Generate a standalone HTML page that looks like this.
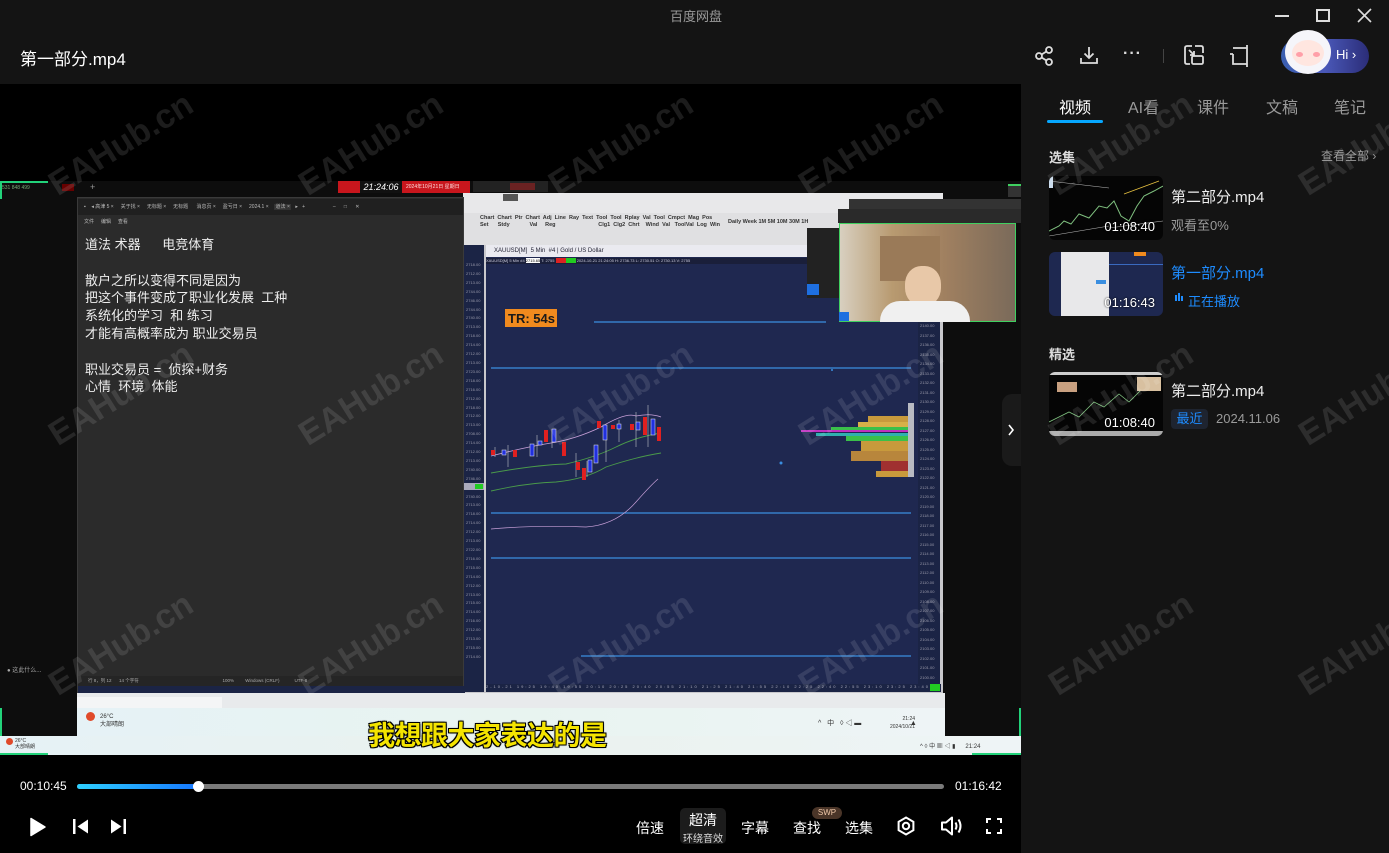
<!DOCTYPE html>
<html><head><meta charset="utf-8">
<style>
*{margin:0;padding:0;box-sizing:border-box}
html{width:1389px;height:853px;overflow:hidden}
body{width:1389px;height:853px;overflow:hidden;background:#141414;font-family:"Liberation Sans","Noto Sans CJK SC",sans-serif;position:relative;color:#fff}
.a{position:absolute}
.wm{position:absolute;font:bold 34px "Liberation Sans",sans-serif;color:rgba(255,255,255,0.11);transform:rotate(-32deg);white-space:nowrap;pointer-events:none;z-index:50}
.tab{position:absolute;top:94px;font-size:16px;color:#9a9a9a}
.thumb{position:absolute;left:1049px;width:114px;height:64px;border-radius:6px;overflow:hidden;background:#050505}
.dur{position:absolute;right:8px;bottom:6px;font-size:13px;color:#fff;text-shadow:0 0 2px #000}
.ctl{position:absolute;top:818px;font-size:14px;color:#fff}
</style></head><body>

<div class="a" style="left:0;top:0;width:1389px;height:84px;background:#141414"></div>
<div class="a" style="left:670px;top:6px;font-size:13px;color:#9a9a9a">百度网盘</div>
<div class="a" style="left:20px;top:45px;font-size:17px;color:#fff">第一部分.mp4</div>
<div class="a" style="left:1275px;top:15px;width:14px;height:1.5px;background:#ddd"></div>
<div class="a" style="left:1316px;top:9px;width:14px;height:13px;border:2px solid #ddd"></div>
<svg class="a" style="left:1357px;top:8px" width="15" height="15"><path d="M1 1L14 14M14 1L1 14" stroke="#ddd" stroke-width="1.6"/></svg>
<svg class="a" style="left:1034px;top:46px" width="20" height="20" fill="none" stroke="#ddd" stroke-width="1.8"><circle cx="5" cy="10" r="3"/><circle cx="15" cy="4" r="3"/><circle cx="15" cy="16" r="3"/><path d="M7.6 8.5L12.4 5.5M7.6 11.5L12.4 14.5"/></svg>
<svg class="a" style="left:1079px;top:45px" width="20" height="20" fill="none" stroke="#ddd" stroke-width="1.8"><path d="M10 2V13M5.5 8.5L10 13L14.5 8.5M2 13V18H18V13"/></svg>
<div class="a" style="left:1123px;top:45px;font-size:16px;color:#ddd;letter-spacing:1px;font-weight:bold">···</div>
<div class="a" style="left:1163px;top:49px;width:1px;height:14px;background:#444"></div>
<svg class="a" style="left:1183px;top:44px" width="22" height="22" fill="none" stroke="#ddd" stroke-width="1.8"><path d="M9 2H4Q2 2 2 4V18Q2 20 4 20H7M12 2H18Q20 2 20 4V9"/><rect x="9" y="12" width="11" height="8" rx="1.5"/><path d="M6 6L11 11M11 7V11H7"/></svg>
<svg class="a" style="left:1228px;top:44px" width="22" height="24" fill="none" stroke="#ddd" stroke-width="1.8"><path d="M2 10H5M5 4H19V20H5V10M19 1V4M19 20V23"/></svg>
<div class="a" style="left:1281px;top:39px;width:88px;height:34px;border-radius:17px;background:linear-gradient(90deg,#3a5fb0,#4a58b8 50%,#2b2d78)"></div>
<div class="a" style="left:1285px;top:30px;width:46px;height:44px;border-radius:50%;background:#f5f5fa"></div>
<div class="a" style="left:1292px;top:40px;width:32px;height:26px;border-radius:50%;background:#ffe6e0"></div>
<div class="a" style="left:1296px;top:52px;width:7px;height:5px;border-radius:50%;background:#ff9fa8"></div>
<div class="a" style="left:1313px;top:52px;width:7px;height:5px;border-radius:50%;background:#ff9fa8"></div>
<div class="a" style="left:1336px;top:47px;font-size:13px;color:#fff">Hi ›</div>

<div class="a" style="left:0;top:84px;width:1021px;height:769px;background:#000"></div>
<div class="a" style="left:1021px;top:84px;width:368px;height:769px;background:#141414"></div>

<div class="a" style="left:0;top:181px;width:1021px;height:574px;background:#0d0d0d;overflow:hidden">
  <div class="a" style="left:0;top:0;width:48px;height:2px;background:#22d27a"></div>
  <div class="a" style="left:0;top:0;width:2px;height:18px;background:#22d27a"></div>
  <div class="a" style="left:2px;top:4px;font-size:5px;color:#7a7">531 848 499</div>
  <div class="a" style="left:62px;top:3px;width:12px;height:7px;background:#600"></div>
  <div class="a" style="left:90px;top:1px;font-size:9px;color:#999">+</div>
  <div class="a" style="left:338px;top:0;width:132px;height:12px;background:#c8161d"></div>
  <div class="a" style="left:360px;top:0;width:42px;height:12px;background:#111;font-size:9px;color:#fff;font-style:italic;text-align:center;line-height:12px">21:24:06</div>
  <div class="a" style="left:406px;top:2px;font-size:5px;color:#fdd">2024年10月21日 星期日</div>
  <div class="a" style="left:473px;top:0;width:75px;height:11px;background:#222"></div>
  <div class="a" style="left:510px;top:2px;width:25px;height:7px;background:#6a2222"></div>
  <div class="a" style="left:463px;top:12px;width:480px;height:20px;background:#e8e8ea"></div>
  <div class="a" style="left:463px;top:32px;width:480px;height:32px;background:#e0e0e2"></div>
  <div class="a" style="left:503px;top:13px;width:15px;height:7px;background:#555"></div>
  <div class="a" style="left:480px;top:34px;font-size:5.5px;color:#333;line-height:7px;white-space:nowrap;font-weight:bold">Chart&nbsp; Chart&nbsp; Ptr&nbsp; Chart&nbsp; Adj&nbsp; Line&nbsp; Ray&nbsp; Text&nbsp; Tool&nbsp; Tool&nbsp; Rplay&nbsp; Val&nbsp; Tool&nbsp; Cmpct&nbsp; Mag&nbsp; Pos<br>Set&nbsp;&nbsp;&nbsp;&nbsp;&nbsp; Stdy&nbsp;&nbsp;&nbsp;&nbsp;&nbsp;&nbsp;&nbsp;&nbsp;&nbsp;&nbsp;&nbsp;&nbsp; Val&nbsp;&nbsp;&nbsp;&nbsp; Reg&nbsp;&nbsp;&nbsp;&nbsp;&nbsp;&nbsp;&nbsp;&nbsp;&nbsp;&nbsp;&nbsp;&nbsp;&nbsp;&nbsp;&nbsp;&nbsp;&nbsp;&nbsp;&nbsp;&nbsp;&nbsp;&nbsp;&nbsp;&nbsp;&nbsp;&nbsp;&nbsp; Clg1&nbsp; Clg2&nbsp; Chrt&nbsp;&nbsp;&nbsp; Wind&nbsp; Val&nbsp;&nbsp; ToolVal&nbsp; Log&nbsp; Win</div>
  <div class="a" style="left:728px;top:38px;font-size:5.5px;color:#333;font-weight:bold;white-space:nowrap">Daily Week 1M 5M 10M 30M 1H</div>
  <div class="a" style="left:463px;top:64px;width:480px;height:450px;background:#c8c8cc"></div>
  <div class="a" style="left:464px;top:64px;width:20px;height:447px;background:#1b2445"></div>
  <div class="a" style="left:486px;top:64px;width:455px;height:12px;background:#eaeaf0;font-size:6px;color:#223;line-height:12px;padding-left:8px">XAUUSD[M]&nbsp; 5 Min&nbsp; #4 | Gold / US Dollar</div>
  <div class="a" style="left:486px;top:76px;width:434px;height:428px;background:#1f2850"></div>
  <div class="a" style="left:486px;top:77px;width:432px;height:6px;background:#1a1f3a;font-size:4px;color:#ccd;white-space:nowrap">XAUUSD[M] 5 Min #4 <span style="background:#fff;color:#000">2715.65</span> T: 2755 <span style="background:#d22">&nbsp;&nbsp;&nbsp;&nbsp;&nbsp;&nbsp;&nbsp;&nbsp;&nbsp;</span><span style="background:#2c2">&nbsp;&nbsp;&nbsp;&nbsp;&nbsp;&nbsp;&nbsp;&nbsp;&nbsp;</span> 2024-10-21 21:24:05 H: 2736.73 L: 2730.51 O: 2730.13 V: 2755</div>
  <div class="a" style="left:918px;top:76px;width:22px;height:428px;background:#1b2445"></div>
  <div class="a" style="left:486px;top:503px;width:455px;height:8px;background:#1b2445"></div>
  <div class="a" style="left:486px;top:503px;font-size:4px;color:#aab;white-space:nowrap;letter-spacing:2px">2-10-21 19:25 19:40 19:55 20:10 20:25 20:40 20:55 21:10 21:25 21:40 21:55 22:10 22:25 22:40 22:55 23:10 23:25 23:40</div>
  <div class="a" style="left:930px;top:503px;width:10px;height:7px;background:#2c2"></div>
  <div class="a" style="left:466px;top:80px;font-size:4px;color:#99a;line-height:8.9px">2718.00<br>2712.00<br>2713.00<br>2744.00<br>2746.00<br>2744.00<br>2740.00<br>2713.00<br>2718.00<br>2714.00<br>2712.00<br>2713.00<br>2723.00<br>2718.00<br>2716.00<br>2712.00<br>2718.00<br>2712.00<br>2713.00<br>2708.00<br>2714.00<br>2712.00<br>2713.00<br>2740.00<br>2746.00<br>2744.00<br>2740.00<br>2713.00<br>2718.00<br>2714.00<br>2712.00<br>2713.00<br>2722.00<br>2716.00<br>2715.00<br>2714.00<br>2712.00<br>2713.00<br>2715.00<br>2714.00<br>2716.00<br>2712.00<br>2713.00<br>2715.00<br>2714.00</div>
  <div class="a" style="left:920px;top:140px;font-size:4px;color:#99a;line-height:9.5px">2140.00<br>2137.00<br>2136.00<br>2135.00<br>2134.00<br>2133.00<br>2132.00<br>2131.00<br>2130.00<br>2129.00<br>2128.00<br>2127.00<br>2126.00<br>2125.00<br>2124.00<br>2123.00<br>2122.00<br>2121.00<br>2120.00<br>2119.00<br>2118.00<br>2117.00<br>2116.00<br>2115.00<br>2114.00<br>2113.00<br>2112.00<br>2110.00<br>2109.00<br>2108.00<br>2107.00<br>2106.00<br>2105.00<br>2104.00<br>2103.00<br>2102.00<br>2101.00<br>2100.00</div>
  <div class="a" style="left:464px;top:302px;width:20px;height:7px;background:#aab"></div>
  <div class="a" style="left:475px;top:303px;width:8px;height:5px;background:#2c2"></div>
  <svg class="a" style="left:486px;top:76px" width="432" height="428">
    <rect x="19" y="52" width="52" height="18" fill="#f08a1e"/>
    <text x="22" y="66" font-family="Liberation Sans" font-weight="bold" font-size="13" fill="#1a1a1a">TR: 54s</text>
    <line x1="108" y1="65" x2="340" y2="65" stroke="#3a8ee0" stroke-width="1.2"/>
    <line x1="5" y1="111" x2="425" y2="111" stroke="#3a8ee0" stroke-width="1.2"/>
    <line x1="5" y1="256" x2="425" y2="256" stroke="#3a8ee0" stroke-width="1.2"/>
    <line x1="5" y1="301" x2="425" y2="301" stroke="#3a8ee0" stroke-width="1.2"/>
    <line x1="95" y1="399" x2="425" y2="399" stroke="#3a8ee0" stroke-width="1.2"/>
    <path d="M5 199Q40 190 65 186Q90 182 115 170Q140 155 150 159Q165 156 175 160" fill="none" stroke="#c8a0d8" stroke-width="0.8"/>
    <path d="M5 216Q50 208 80 207Q110 200 130 190Q150 180 175 176" fill="none" stroke="#4a9a4a" stroke-width="0.9"/>
    <path d="M5 234Q40 226 70 225Q100 222 120 210Q150 200 175 196" fill="none" stroke="#4a9a4a" stroke-width="0.9"/>
    <path d="M5 272Q50 268 100 270Q130 268 150 245Q165 228 172 222" fill="none" stroke="#c8a0d8" stroke-width="0.7"/>
    <g stroke="#ddd" stroke-width="0.5">
      <line x1="9" y1="190" x2="9" y2="200"/><line x1="22" y1="188" x2="22" y2="210"/><line x1="51" y1="178" x2="51" y2="200"/><line x1="66" y1="172" x2="66" y2="191"/><line x1="90" y1="196" x2="90" y2="220"/><line x1="101" y1="204" x2="101" y2="220"/><line x1="120" y1="170" x2="120" y2="205"/><line x1="133" y1="163" x2="133" y2="185"/><line x1="150" y1="155" x2="150" y2="190"/><line x1="162" y1="148" x2="162" y2="190"/>
    </g>
    <g fill="#e02020">
      <rect x="5" y="193" width="4" height="5"/><rect x="27" y="193" width="4" height="7"/><rect x="58" y="173" width="4" height="12"/><rect x="76" y="185" width="4" height="14"/><rect x="90" y="205" width="4" height="8"/><rect x="96" y="211" width="4" height="12"/><rect x="111" y="164" width="4" height="7"/><rect x="125" y="168" width="4" height="4"/><rect x="144" y="167" width="4" height="6"/><rect x="157" y="160" width="4" height="18"/><rect x="171" y="170" width="4" height="14"/>
    </g>
    <g fill="#2030e0" stroke="#eee" stroke-width="0.5">
      <rect x="16" y="193" width="4" height="5"/><rect x="44" y="187" width="4" height="12"/><rect x="52" y="184" width="4" height="4"/><rect x="66" y="172" width="4" height="13"/><rect x="102" y="203" width="4" height="12"/><rect x="108" y="188" width="4" height="18"/><rect x="117" y="168" width="4" height="15"/><rect x="131" y="167" width="4" height="5"/><rect x="150" y="165" width="4" height="8"/><rect x="165" y="162" width="4" height="16"/>
    </g>
    <circle cx="295" cy="206" r="1.5" fill="#3a8ee0"/><circle cx="346" cy="113" r="1" fill="#3a8ee0"/>
    <g>
      <rect x="382" y="159" width="40" height="8" fill="#c89a3c"/>
      <rect x="372" y="165" width="50" height="6" fill="#d8b048"/>
      <rect x="345" y="170" width="77" height="3" fill="#3ac04a"/>
      <rect x="315" y="173" width="107" height="2" fill="#c030c0"/>
      <rect x="330" y="176" width="92" height="3" fill="#30b0b0"/>
      <rect x="360" y="179" width="62" height="5" fill="#3ac04a"/>
      <rect x="375" y="184" width="47" height="10" fill="#c89a3c"/>
      <rect x="365" y="194" width="57" height="10" fill="#b8863c"/>
      <rect x="395" y="204" width="27" height="10" fill="#a03030"/>
      <rect x="390" y="214" width="32" height="6" fill="#c89a3c"/>
      <rect x="422" y="146" width="6" height="74" fill="#e0e0e0" opacity="0.8"/>
    </g>
  </svg>
  <div class="a" style="left:807px;top:47px;width:32px;height:70px;background:#222"></div>
  <div class="a" style="left:807px;top:103px;width:12px;height:11px;background:#1e6fe0"></div>
  <div class="a" style="left:849px;top:18px;width:172px;height:10px;background:#333"></div>
  <div class="a" style="left:838px;top:28px;width:183px;height:14px;background:#2a2a2a"></div>
  <div class="a" style="left:839px;top:42px;width:177px;height:99px;border:1px solid #3fd060;background:linear-gradient(90deg,#d8d0c0 0%,#b89a70 30%,#a08060 60%,#7a6a5a 100%)"></div>
  <div class="a" style="left:880px;top:55px;width:60px;height:45px;background:#9a7a58"></div>
  <div class="a" style="left:905px;top:85px;width:36px;height:40px;border-radius:45%;background:#e8c8a8"></div>
  <div class="a" style="left:880px;top:120px;width:90px;height:21px;border-radius:20px 20px 0 0;background:#f0f0f0"></div>
  <div class="a" style="left:839px;top:131px;width:10px;height:9px;background:#1e6fe0"></div>
  <div class="a" style="left:1008px;top:3px;width:13px;height:13px;background:#333;border-top:2px solid #3fd060"></div>
  <div class="a" style="left:7px;top:484px;font-size:6px;color:#aaa">● 这此什么...</div>
  <div class="a" style="left:77px;top:16px;width:387px;height:502px;background:#2b2b2b;border:1px solid #3a3a3a"></div>
  <div class="a" style="left:78px;top:18px;width:385px;height:16px;background:#202020;font-size:5px;color:#bbb;line-height:16px;white-space:nowrap;padding-left:6px">▪&nbsp;&nbsp;&nbsp;&nbsp;◂ 高津 5 ×&nbsp;&nbsp;&nbsp;&nbsp; 关于找 ×&nbsp;&nbsp;&nbsp;&nbsp; 无标题 ×&nbsp;&nbsp;&nbsp;&nbsp; 无标题&nbsp;&nbsp;&nbsp;&nbsp;&nbsp; 消息页 ×&nbsp;&nbsp;&nbsp;&nbsp; 盈亏日 ×&nbsp;&nbsp;&nbsp;&nbsp; 2024.1 ×&nbsp;&nbsp;&nbsp; <span style="background:#333">&nbsp;道法 ×&nbsp;</span>&nbsp;&nbsp; ▸&nbsp;&nbsp; +&nbsp;&nbsp;&nbsp;&nbsp;&nbsp;&nbsp;&nbsp;&nbsp;&nbsp;&nbsp;&nbsp;&nbsp;&nbsp;&nbsp;&nbsp;&nbsp;&nbsp;&nbsp;&nbsp; –&nbsp;&nbsp;&nbsp;&nbsp;&nbsp; □&nbsp;&nbsp;&nbsp;&nbsp;&nbsp; ✕</div>
  <div class="a" style="left:84px;top:37px;font-size:5px;color:#bbb">文件&nbsp;&nbsp;&nbsp;&nbsp; 编辑&nbsp;&nbsp;&nbsp;&nbsp; 查看</div>
  <div class="a" style="left:85px;top:55px;font-size:13px;color:#eee;line-height:17.8px;white-space:pre">道法 术器      电竞体育

散户之所以变得不同是因为
把这个事件变成了职业化发展  工种
系统化的学习  和 练习
才能有高概率成为 职业交易员

职业交易员 =  侦探+财务
心情  环境  体能</div>
  <div class="a" style="left:78px;top:495px;width:385px;height:10px;background:#252525;font-size:4.5px;color:#aaa;white-space:nowrap;line-height:10px;padding-left:10px">行 8，列 12&nbsp;&nbsp;&nbsp;&nbsp;&nbsp; 14 个字符&nbsp;&nbsp;&nbsp;&nbsp;&nbsp;&nbsp;&nbsp;&nbsp;&nbsp;&nbsp;&nbsp;&nbsp;&nbsp;&nbsp;&nbsp;&nbsp;&nbsp;&nbsp;&nbsp;&nbsp;&nbsp;&nbsp;&nbsp;&nbsp;&nbsp;&nbsp;&nbsp;&nbsp;&nbsp;&nbsp;&nbsp;&nbsp;&nbsp;&nbsp;&nbsp;&nbsp;&nbsp;&nbsp;&nbsp;&nbsp;&nbsp;&nbsp;&nbsp;&nbsp;&nbsp;&nbsp;&nbsp;&nbsp;&nbsp;&nbsp;&nbsp;&nbsp;&nbsp;&nbsp;&nbsp;&nbsp;&nbsp;&nbsp;&nbsp;&nbsp;&nbsp;&nbsp;&nbsp;&nbsp;&nbsp;&nbsp; 100%&nbsp;&nbsp;&nbsp;&nbsp;&nbsp;&nbsp;&nbsp;&nbsp; Windows (CRLF)&nbsp;&nbsp;&nbsp;&nbsp;&nbsp;&nbsp;&nbsp;&nbsp;&nbsp;&nbsp;&nbsp; UTF-8</div>
  <div class="a" style="left:78px;top:505px;width:387px;height:7px;background:#1b2445"></div>
  <div class="a" style="left:77px;top:512px;width:868px;height:15px;background:#e8eaec"></div>
  <div class="a" style="left:77px;top:516px;width:145px;height:11px;background:#f4f5f6"></div>
  <div class="a" style="left:77px;top:527px;width:868px;height:28px;background:linear-gradient(90deg,#e6f2f6,#e8f4f0 50%,#eef4f6)"></div>
  <div class="a" style="left:86px;top:531px;width:9px;height:9px;border-radius:50%;background:#e04a2a"></div>
  <div class="a" style="left:100px;top:532px;font-size:6px;color:#333;line-height:8px">26°C<br>大部晴朗</div>
  <div class="a" style="left:818px;top:537px;font-size:7px;color:#333;white-space:nowrap">^&nbsp;&nbsp; 中&nbsp;&nbsp; ◊ ◁ ▬&nbsp;&nbsp;&nbsp;&nbsp;&nbsp;&nbsp;&nbsp;&nbsp;&nbsp;&nbsp;&nbsp;&nbsp;&nbsp;&nbsp;&nbsp;&nbsp;&nbsp;&nbsp;&nbsp;&nbsp;&nbsp;&nbsp;&nbsp;&nbsp; ▲</div>
  <div class="a" style="left:890px;top:534px;font-size:5px;color:#333;line-height:8px;text-align:right">21:24<br>2024/10/21</div>
  <div class="a" style="left:0;top:527px;width:2px;height:28px;background:#22d27a"></div>
  <div class="a" style="left:1019px;top:527px;width:2px;height:28px;background:#22d27a"></div>
  <div class="a" style="left:0;top:555px;width:1021px;height:19px;background:linear-gradient(90deg,#e6f2f6,#eaf2ee 50%,#eef4f6)"></div>
  <div class="a" style="left:6px;top:557px;width:7px;height:7px;border-radius:50%;background:#e04a2a"></div>
  <div class="a" style="left:15px;top:557px;font-size:5px;color:#333;line-height:6px">26°C<br>大部晴朗</div>
  <div class="a" style="left:920px;top:560px;font-size:6px;color:#333">^ ◊ 中 ▦ ◁ ▮&nbsp;&nbsp;&nbsp;&nbsp;&nbsp; 21:24</div>
  <div class="a" style="left:0;top:572px;width:48px;height:2px;background:#22d27a"></div>
  <div class="a" style="left:972px;top:572px;width:49px;height:2px;background:#22d27a"></div>
  <div class="a" style="left:368px;top:533px;font-size:27px;font-weight:bold;color:#f4e400;letter-spacing:-0.5px;-webkit-text-stroke:1.5px #1a1a1a;paint-order:stroke fill;text-shadow:0 0 2px #000,1px 1px 0 #000,-1px -1px 0 #000,1px -1px 0 #000,-1px 1px 0 #000">我想跟大家表达的是</div>
</div>
<div class="a" style="left:1002px;top:394px;width:19px;height:72px;background:#1a1a1a;border-radius:10px 0 0 10px"></div>
<svg class="a" style="left:1007px;top:424px" width="8" height="12"><path d="M2 1L6 6L2 11" stroke="#fff" stroke-width="1.6" fill="none"/></svg>

<div class="a" style="left:20px;top:779px;font-size:12px;color:#fff">00:10:45</div>
<div class="a" style="left:77px;top:783.5px;width:867px;height:5px;border-radius:3px;background:#7a7a7a"></div>
<div class="a" style="left:77px;top:783.5px;width:122px;height:5px;border-radius:3px;background:linear-gradient(90deg,#2ed0ff,#1677ff)"></div>
<div class="a" style="left:193px;top:780.5px;width:11px;height:11px;border-radius:50%;background:#fff"></div>
<div class="a" style="left:955px;top:779px;font-size:12px;color:#fff">01:16:42</div>
<svg class="a" style="left:29px;top:817px" width="18" height="20"><path d="M2 1.5L16 10L2 18.5Z" fill="#fff" stroke="#fff" stroke-linejoin="round" stroke-width="1.5"/></svg>
<svg class="a" style="left:72px;top:818px" width="18" height="17"><rect x="1" y="1" width="2.5" height="15" fill="#fff"/><path d="M16 1.5L5.5 8.5L16 15.5Z" fill="#fff"/></svg>
<svg class="a" style="left:110px;top:818px" width="18" height="17"><path d="M1 1.5L11.5 8.5L1 15.5Z" fill="#fff"/><rect x="13.5" y="1" width="2.5" height="15" fill="#fff"/></svg>
<div class="ctl" style="left:636px">倍速</div>
<div class="a" style="left:680px;top:808px;width:46px;height:36px;border-radius:5px;background:#1c1c1c"></div>
<div class="ctl" style="left:689px;top:810px">超清</div>
<div class="a" style="left:683px;top:830px;font-size:10px;color:#ddd">环绕音效</div>
<div class="ctl" style="left:741px">字幕</div>
<div class="a" style="left:812px;top:807px;width:30px;height:12px;border-radius:6px;background:#4a3528;font-size:8px;color:#f0c8a8;text-align:center;line-height:12px">SWP</div>
<div class="ctl" style="left:793px">查找</div>
<div class="ctl" style="left:845px">选集</div>
<svg class="a" style="left:896px;top:816px" width="20" height="20" fill="none" stroke="#fff" stroke-width="2"><path d="M10 1.5L17.4 5.8V14.2L10 18.5L2.6 14.2V5.8Z"/><circle cx="10" cy="10" r="3.2"/></svg>
<svg class="a" style="left:940px;top:815px" width="24" height="22" fill="none" stroke="#fff" stroke-width="2" stroke-linejoin="round"><path d="M2 7.5H6L12 2.5V19.5L6 14.5H2Z"/><path d="M15.5 7.5Q17.5 11 15.5 14.5M18.5 4.5Q22.5 11 18.5 17.5"/></svg>
<svg class="a" style="left:986px;top:818px" width="16" height="16" fill="none" stroke="#fff" stroke-width="2"><path d="M1 5V1H5M11 1H15V5M15 11V15H11M5 15H1V11"/></svg>

<div class="tab" style="left:1059px;color:#fff">视频</div>
<div class="a" style="left:1047px;top:120px;width:56px;height:3px;border-radius:2px;background:#06a7ff"></div>
<div class="tab" style="left:1128px">AI看</div>
<div class="tab" style="left:1197px">课件</div>
<div class="tab" style="left:1266px">文稿</div>
<div class="tab" style="left:1334px">笔记</div>
<div class="a" style="left:1049px;top:147px;font-size:13px;font-weight:bold;color:#ddd">选集</div>
<div class="a" style="left:1321px;top:147px;font-size:12px;color:#9a9a9a">查看全部 ›</div>

<div class="thumb" style="top:176px">
  <svg width="114" height="64"><path d="M0 55L10 50L15 45L22 48L30 38L40 42L50 30L58 32L65 25L72 40L80 45L88 30L95 20L105 15L114 10" stroke="#7fc07f" stroke-width="1" fill="none"/><path d="M0 5L60 12M0 60L60 50M60 52L114 45" stroke="#bbb" stroke-width="0.6"/><path d="M75 18L110 5" stroke="#e6c040" stroke-width="0.8"/><rect x="0" y="0" width="4" height="12" fill="#cde"/></svg>
  <div class="dur">01:08:40</div></div>
<div class="a" style="left:1171px;top:186px;font-size:15px;color:#eee">第二部分.mp4</div>
<div class="a" style="left:1171px;top:215px;font-size:13px;color:#9a9a9a">观看至0%</div>

<div class="thumb" style="top:252px;background:#1e2850">
  <div class="a" style="left:12px;top:0;width:48px;height:64px;background:#e8e8ea"></div>
  <div class="a" style="left:47px;top:28px;width:10px;height:4px;background:#3a8ee0"></div>
  <div class="a" style="left:60px;top:12px;width:54px;height:1px;background:#3a6ac0"></div>
  <div class="a" style="left:85px;top:0;width:12px;height:4px;background:#f08a1e"></div>
  <div class="dur">01:16:43</div></div>
<div class="a" style="left:1171px;top:262px;font-size:15px;color:#1e8cff">第一部分.mp4</div>
<div class="a" style="left:1175px;top:295px;width:2px;height:6px;background:#1e8cff"></div>
<div class="a" style="left:1178px;top:293px;width:2px;height:8px;background:#1e8cff"></div>
<div class="a" style="left:1181px;top:296px;width:2px;height:5px;background:#1e8cff"></div>
<div class="a" style="left:1188px;top:291px;font-size:13px;color:#1e8cff">正在播放</div>

<div class="a" style="left:1049px;top:344px;font-size:13px;font-weight:bold;color:#ddd">精选</div>
<div class="thumb" style="top:372px">
  <div class="a" style="left:0;top:0;width:114px;height:3px;background:#ccc"></div>
  <div class="a" style="left:8px;top:10px;width:20px;height:10px;background:#c8a080"></div>
  <div class="a" style="left:88px;top:5px;width:24px;height:14px;background:#d8c0a0"></div>
  <svg width="114" height="64"><path d="M0 50L20 40L30 45L45 30L55 35L70 22L80 30L95 15" stroke="#7fc07f" stroke-width="0.8" fill="none"/></svg>
  <div class="a" style="left:0;top:59px;width:114px;height:5px;background:#aaa"></div>
  <div class="dur">01:08:40</div></div>
<div class="a" style="left:1171px;top:380px;font-size:15px;color:#eee">第二部分.mp4</div>
<div class="a" style="left:1171px;top:409px;width:37px;height:20px;border-radius:4px;background:#1e2430;font-size:13px;color:#1e8cff;text-align:center;line-height:20px">最近</div>
<div class="a" style="left:1216px;top:411px;font-size:13px;color:#9a9a9a">2024.11.06</div>

<div class="wm" style="left:40px;top:125px">EAHub.cn</div>
<div class="wm" style="left:290px;top:125px">EAHub.cn</div>
<div class="wm" style="left:540px;top:125px">EAHub.cn</div>
<div class="wm" style="left:790px;top:125px">EAHub.cn</div>
<div class="wm" style="left:1040px;top:125px">EAHub.cn</div>
<div class="wm" style="left:1290px;top:125px">EAHub.cn</div>
<div class="wm" style="left:40px;top:375px">EAHub.cn</div>
<div class="wm" style="left:290px;top:375px">EAHub.cn</div>
<div class="wm" style="left:540px;top:375px">EAHub.cn</div>
<div class="wm" style="left:790px;top:375px">EAHub.cn</div>
<div class="wm" style="left:1040px;top:375px">EAHub.cn</div>
<div class="wm" style="left:1290px;top:375px">EAHub.cn</div>
<div class="wm" style="left:40px;top:625px">EAHub.cn</div>
<div class="wm" style="left:290px;top:625px">EAHub.cn</div>
<div class="wm" style="left:540px;top:625px">EAHub.cn</div>
<div class="wm" style="left:790px;top:625px">EAHub.cn</div>
<div class="wm" style="left:1040px;top:625px">EAHub.cn</div>
<div class="wm" style="left:1290px;top:625px">EAHub.cn</div>
</body></html>
